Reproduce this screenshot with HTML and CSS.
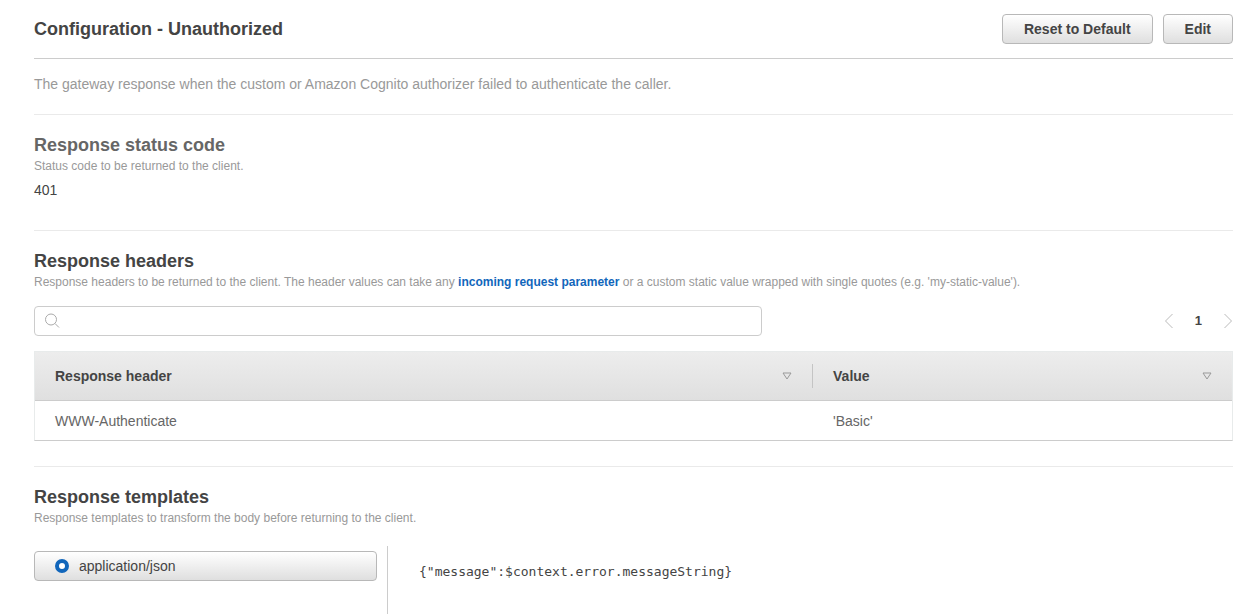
FILE: index.html
```html
<!DOCTYPE html>
<html lang="en">
<head>
<meta charset="utf-8">
<title>Configuration - Unauthorized</title>
<link rel="stylesheet" href="styles.css">
</head>
<body>
<main class="page">
  <header class="page-header">
    <h1 class="title">Configuration - Unauthorized</h1>
    <div class="actions">
      <button class="btn" type="button">Reset to Default</button>
      <button class="btn" type="button">Edit</button>
    </div>
  </header>
  <p class="intro">The gateway response when the custom or Amazon Cognito authorizer failed to authenticate the caller.</p>

  <section class="section status">
    <h2 class="title title-muted">Response status code</h2>
    <p class="hint">Status code to be returned to the client.</p>
    <p class="status-value">401</p>
  </section>

  <section class="section headers">
    <h2 class="title">Response headers</h2>
    <p class="hint">Response headers to be returned to the client. The header values can take any <a class="link" href="#parameters">incoming request parameter</a> or a custom static value wrapped with single quotes (e.g. 'my-static-value').</p>
    <div class="toolbar">
      <label class="search">
        <svg class="search-icon" width="16" height="16" viewBox="0 0 16 16" aria-hidden="true"><circle cx="6" cy="6.5" r="5.5"/><path d="M10 10.5L14 14.5"/></svg>
        <input class="search-input" type="search" aria-label="Search response headers">
      </label>
      <nav class="pager" aria-label="Pages">
        <button class="pager-btn" type="button" aria-label="Previous page"><svg width="10" height="16" viewBox="0 0 10 16"><path d="M8.5 1L1.5 8L8.5 15"/></svg></button>
        <span class="pager-current">1</span>
        <button class="pager-btn" type="button" aria-label="Next page"><svg width="10" height="16" viewBox="0 0 10 16"><path d="M1.5 1L8.5 8L1.5 15"/></svg></button>
      </nav>
    </div>
    <table class="table">
      <thead>
        <tr>
          <th class="col-name" scope="col"><div class="th-inner">Response header<svg class="sort" width="10" height="8" viewBox="0 0 10 8" aria-hidden="true"><path d="M1 1H9L5 7Z"/></svg></div></th>
          <th scope="col"><div class="th-inner">Value<svg class="sort" width="10" height="8" viewBox="0 0 10 8" aria-hidden="true"><path d="M1 1H9L5 7Z"/></svg></div></th>
        </tr>
      </thead>
      <tbody>
        <tr><td>WWW-Authenticate</td><td>'Basic'</td></tr>
      </tbody>
    </table>
  </section>

  <section class="section templates">
    <h2 class="title">Response templates</h2>
    <p class="hint">Response templates to transform the body before returning to the client.</p>
    <div class="template-panes">
      <div class="template-list">
        <label class="template-option"><input class="radio" type="radio" name="template" checked>application/json</label>
      </div>
      <pre class="template-body"><code>{"message":$context.error.messageString}</code></pre>
    </div>
  </section>
</main>
</body>
</html>
```
FILE: styles.css
```css
* { box-sizing: border-box; }

body {
  margin: 0;
  background: #fff;
  color: #444;
  font: 14px/20px "Liberation Sans", Arial, sans-serif;
}

h1, h2, p, pre { margin: 0; }

.page {
  display: flex;
  flex-direction: column;
  min-height: 100vh;
  padding: 0 12px 0 34px;
}

.page-header {
  display: flex;
  align-items: center;
  justify-content: space-between;
  padding: 14px 0;
  border-bottom: 1px solid #ccc;
}

.title {
  font-size: 18px;
  line-height: 22px;
  font-weight: bold;
}

.title-muted { color: #666; }

.actions {
  display: flex;
  gap: 10px;
}

.btn {
  height: 30px;
  padding: 0 21px;
  border: 1px solid #b8b8b8;
  border-radius: 4px;
  background: linear-gradient(#fff, #dfdfdf);
  color: #444;
  font: bold 14px/20px "Liberation Sans", Arial, sans-serif;
}

.intro {
  padding: 15px 0 20px;
  color: #999;
}

.section {
  padding: 19px 0 25px;
  border-top: 1px solid #eaeaea;
}

.hint {
  color: #999;
  font-size: 12px;
  line-height: 20px;
}

.status { padding-bottom: 30px; }
.status-value { padding-top: 4px; }

.link {
  color: #1166bb;
  font-weight: bold;
  text-decoration: none;
}

.toolbar {
  display: flex;
  align-items: center;
  justify-content: space-between;
  gap: 20px;
  padding: 14px 0 15px;
}

.search {
  display: flex;
  align-items: center;
  flex: 0 1 728px;
  height: 30px;
  padding: 0 10px;
  gap: 8px;
  border: 1px solid #ccc;
  border-radius: 4px;
}

.search-icon {
  fill: none;
  stroke: #aaa;
}

.search-input {
  flex: 1;
  min-width: 0;
  border: 0;
  outline: 0;
  background: none;
  font: inherit;
}

.pager {
  display: flex;
  align-items: center;
  gap: 21px;
}

.pager-btn {
  display: flex;
  padding: 0;
  border: 0;
  background: none;
  fill: none;
  stroke: #bbb;
}

.pager-current {
  font-size: 13px;
  font-weight: bold;
}

.table {
  width: 100%;
  border: 1px solid #e8ebeb;
  border-bottom-color: #ccc;
  border-collapse: separate;
  border-spacing: 0;
}

.table thead { background: linear-gradient(#ededed, #dfdfdf); }

.table th {
  height: 49px;
  padding: 0;
  border-bottom: 1px solid #ccc;
  text-align: left;
}

.col-name { width: 65%; }

.th-inner {
  display: flex;
  align-items: center;
  justify-content: space-between;
  height: 24px;
  padding: 0 20px;
}

.col-name .th-inner { border-right: 1px solid #c4c4c4; }

.sort {
  fill: none;
  stroke: #999;
}

.table td {
  height: 39px;
  padding: 0 20px;
  color: #666;
}

.templates {
  display: flex;
  flex: 1;
  flex-direction: column;
  padding-bottom: 0;
}

.template-panes {
  display: flex;
  flex: 1;
  padding-top: 18px;
}

.template-list {
  flex: 0 0 354px;
  padding: 5px 10px 0 0;
  border-right: 1px solid #ccc;
}

.template-option {
  display: flex;
  align-items: center;
  gap: 10px;
  height: 30px;
  padding: 0 20px;
  border: 1px solid #b8b8b8;
  border-radius: 4px;
  background: linear-gradient(#fff, #dfdfdf);
}

.radio {
  appearance: none;
  width: 14px;
  height: 14px;
  margin: 0;
  border: 4px solid #1166bb;
  border-radius: 50%;
  background: #fff;
}

.template-body {
  padding: 15px 31px;
}

.template-body code {
  font: 13px/20px Consolas, "DejaVu Sans Mono", monospace;
}
```
